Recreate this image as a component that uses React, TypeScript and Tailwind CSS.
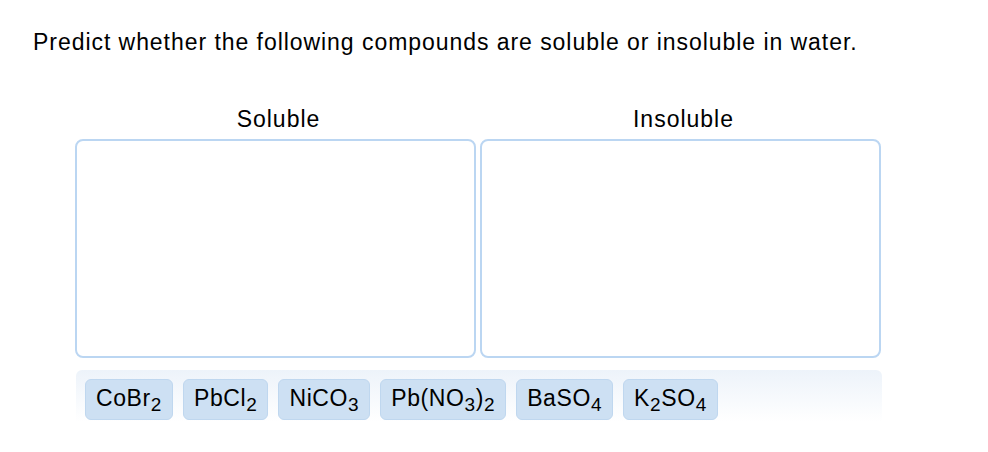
import React from 'react';

type Compound = { id: string; parts: [string, string?][] };

// Each part is [text, subscript]
const compounds: Compound[] = [
    { id: 'cobr2', parts: [['CoBr', '2']] },
    { id: 'pbcl2', parts: [['PbCl', '2']] },
    { id: 'nico3', parts: [['NiCO', '3']] },
    { id: 'pbno32', parts: [['Pb(NO', '3'], [')', '2']] },
    { id: 'baso4', parts: [['BaSO', '4']] },
    { id: 'k2so4', parts: [['K', '2'], ['SO', '4']] },
];

const Formula: React.FC<{ parts: [string, string?][] }> = ({ parts }) => (
    <span>
        {parts.map(([text, sub], i) => (
            <React.Fragment key={i}>
                {text}
                {sub && <span className="text-[19px] relative top-[5px]">{sub}</span>}
            </React.Fragment>
        ))}
    </span>
);

const DropZone: React.FC<{ label: string }> = ({ label }) => (
    <div className="flex flex-col w-[401px]">
        <div className="text-center text-[23px] tracking-[1px] leading-none h-[31px] pl-[6px]">{label}</div>
        <div className="h-[219px] border-2 border-[#bbd6f2] rounded-[8px] bg-white" />
    </div>
);

export default function App() {
    return (
        <div className="w-[988px] h-[452px] bg-white text-black font-['Liberation_Sans',Arial,sans-serif]">
            <div className="pt-[31px] pl-[33px] text-[23px] leading-none tracking-[0.95px]">
                Predict whether the following compounds are soluble or insoluble in water.
            </div>
            <div className="flex gap-[4px] pl-[75px] mt-[54px]">
                <DropZone label="Soluble" />
                <DropZone label="Insoluble" />
            </div>
            <div className="ml-[76px] mt-[12px] w-[806px] h-[52px] rounded-t-[6px] bg-gradient-to-b from-[#edf3fa] to-white flex gap-[10px] pl-[9px] pt-[9px]">
                {compounds.map(c => (
                    <div
                        key={c.id}
                        className="h-[41px] px-[10px] flex items-center rounded-[6px] border border-[#bfd7ef] bg-[#cde0f3] text-[23px] leading-none tracking-[0.6px] pb-[3px]"
                    >
                        <Formula parts={c.parts} />
                    </div>
                ))}
            </div>
        </div>
    );
}
